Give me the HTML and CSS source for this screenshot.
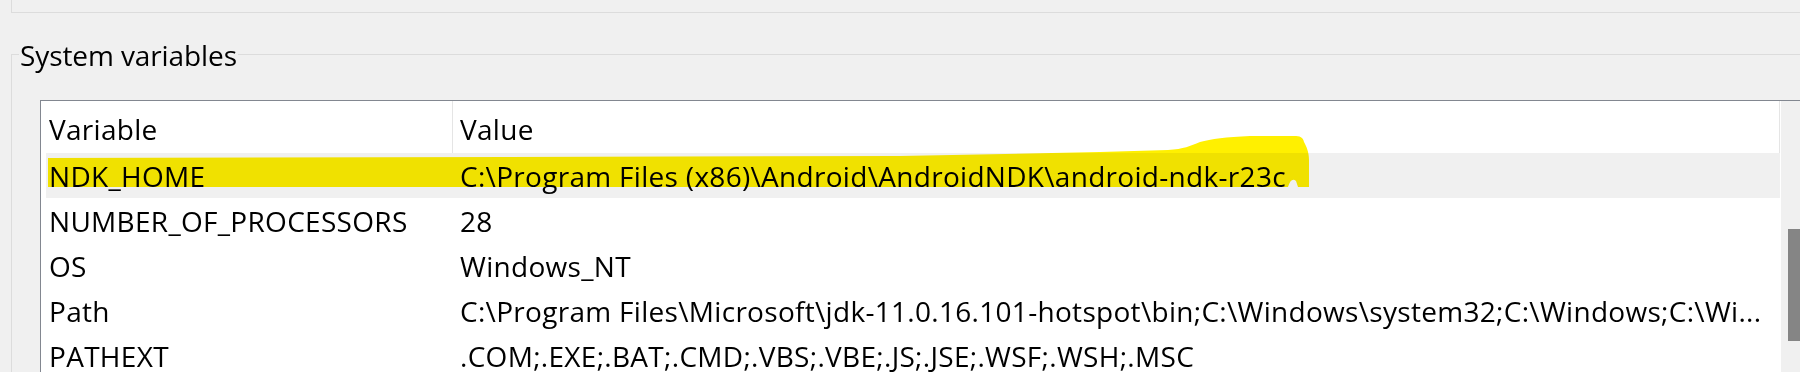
FILE: index.html
```html
<!DOCTYPE html>
<html lang="en">
<head>
    <meta charset="UTF-8">
    <meta name="viewport" content="width=device-width, initial-scale=1.0">
    <title>Environment Variables</title>
    <link rel="stylesheet" href="styles.css">
</head>
<body>
    <div class="screen">
        <!-- Bottom edge of the "User variables" group above -->
        <div class="user-group"></div>

        <!-- System variables group -->
        <fieldset class="group">
            <legend>System variables</legend>

            <div class="listbox">
                <div class="list-main">
                    <div class="list-header">
                        <div class="head-cell col-var">Variable</div>
                        <div class="head-cell col-val">Value</div>
                    </div>

                    <div class="row selected">
                        <div class="cell cell-var">NDK_HOME</div>
                        <div class="cell cell-val">C:\Program Files (x86)\Android\AndroidNDK\android-ndk-r23c</div>
                    </div>
                    <div class="row">
                        <div class="cell cell-var">NUMBER_OF_PROCESSORS</div>
                        <div class="cell cell-val">28</div>
                    </div>
                    <div class="row">
                        <div class="cell cell-var">OS</div>
                        <div class="cell cell-val">Windows_NT</div>
                    </div>
                    <div class="row">
                        <div class="cell cell-var">Path</div>
                        <div class="cell cell-val">C:\Program Files\Microsoft\jdk-11.0.16.101-hotspot\bin;C:\Windows\system32;C:\Windows;C:\Wi...</div>
                    </div>
                    <div class="row">
                        <div class="cell cell-var">PATHEXT</div>
                        <div class="cell cell-val">.COM;.EXE;.BAT;.CMD;.VBS;.VBE;.JS;.JSE;.WSF;.WSH;.MSC</div>
                    </div>
                </div>

                <!-- Vertical scrollbar -->
                <div class="scrollbar">
                    <div class="thumb"></div>
                </div>
            </div>
        </fieldset>

        <!-- Yellow highlighter stroke drawn over the NDK_HOME row -->
        <svg class="marker" width="1800" height="372" viewBox="0 0 1800 372">
            <path d="M48 158 L48 187 L1288 187 C1290 180 1293 178 1296 181 L1298 187 L1309 187 L1309 160
                     C1309 151 1306 146 1304 142 C1303 137 1300 136 1294 136 L1250 136
                     C1226 137 1211 139 1200 142 C1190 146 1184 149 1168 150
                     L1100 152 L900 156 Z" />
        </svg>
    </div>
</body>
</html>
```

FILE: styles.css
```css
/* Page = a window background */
body {
    margin: 0;
    background: #f0f0f0;
    font-family: "Open Sans", "Noto Sans", sans-serif;
    color: #000000;
    overflow: hidden;
}

.screen {
    position: relative;
    width: 1800px;
    height: 372px;
    overflow: hidden;
}

/* Remains of the group box above */
.user-group {
    height: 12px;
    margin-left: 11px;
    width: 1900px;
    border-left: 1px solid #dcdcdc;
    border-bottom: 1px solid #dcdcdc;
}

/* System variables group box */
.group {
    margin: 21px 0 0 11px;
    padding: 25px 0 0 7px;
    width: 1900px;
    border: 1px solid #dcdcdc;
    border-right: none;
    border-bottom: none;
}

.group legend {
    padding: 2px 1px 0 1px;
    font-size: 28px;
    line-height: 39px;
    letter-spacing: -0.1px;
}

/* List view */
.listbox {
    display: flex;
    margin-left: 21px;
    width: 1782px;
    border: 1px solid #828790;
    border-bottom: none;
    background: #ffffff;
    font-size: 28px;
    letter-spacing: 0.3px;
}

.list-main {
    width: 1740px;
    flex: none;
}

.list-header {
    display: flex;
    height: 52px;
}

.head-cell {
    box-sizing: border-box;
    padding-top: 4px;
    line-height: 48px;
    border-right: 1px solid #e5e5e5;
    white-space: nowrap;
}

.head-cell.col-var {
    width: 412px;
    padding-left: 8px;
}

.head-cell.col-val {
    width: 1327px;
    padding-left: 7px;
}

.row {
    display: flex;
    margin-left: 5px;
    width: 1734px;
    height: 45px;
}

.row.selected {
    background: #f0f0f0;
}

.cell {
    box-sizing: border-box;
    padding-top: 2px;
    line-height: 43px;
    white-space: nowrap;
    overflow: hidden;
}

.cell-var {
    width: 406px;
    padding-left: 3px;
}

.cell-val {
    flex: 1;
    padding-left: 8px;
}

/* Scrollbar */
.scrollbar {
    width: 42px;
    flex: none;
    background: #f0f0f0;
    padding-top: 128px;
}

.thumb {
    width: 28px;
    height: 112px;
    margin-left: 7px;
    background: #858585;
}

/* Highlighter annotation on top of the list */
.marker {
    position: absolute;
    left: 0;
    top: 0;
    pointer-events: none;
    mix-blend-mode: multiply;
}

.marker path {
    fill: #fff000;
}
```
